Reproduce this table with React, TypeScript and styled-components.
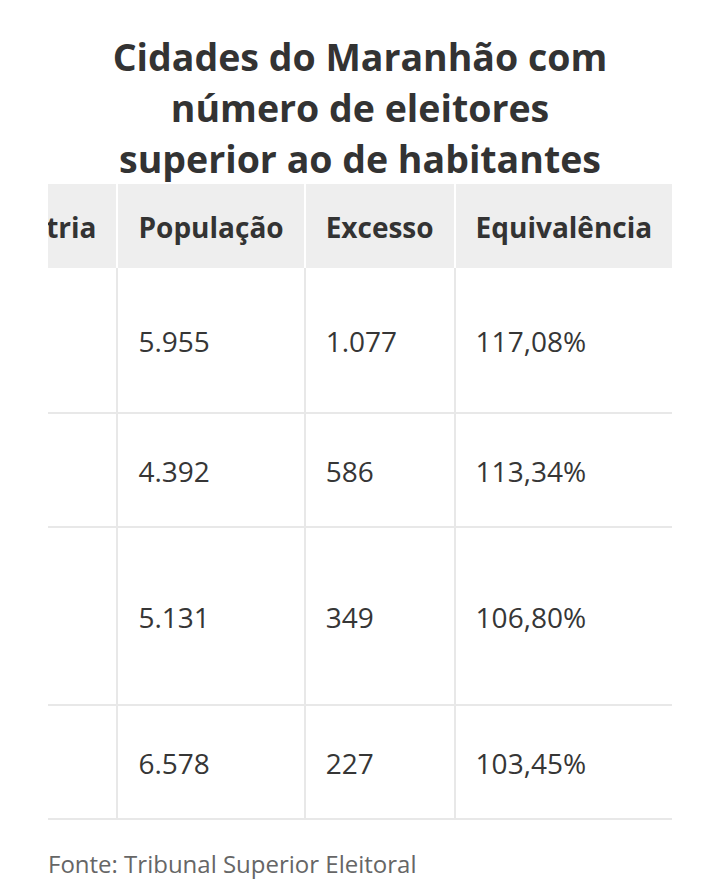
import React, { useLayoutEffect, useRef } from 'react';
import styled, { createGlobalStyle } from 'styled-components';

const GlobalStyle = createGlobalStyle`
  html, body {
    margin: 0;
    padding: 0;
    background: #ffffff;
  }
  body {
    font-family: 'Open Sans', 'Noto Sans', sans-serif;
    color: #333333;
  }
`;

type Row = {
  city: string[];
  voters: string;
  biometry: string;
  population: string;
  excess: string;
  ratio: string;
};

const rows: Row[] = [
  { city: ['Nova', 'Iorque'], voters: '7.032', biometry: 'Sim', population: '5.955', excess: '1.077', ratio: '117,08%' },
  { city: ['Bacurituba'], voters: '4.978', biometry: 'Sim', population: '4.392', excess: '586', ratio: '113,34%' },
  { city: ['São Pedro', 'dos', 'Crentes'], voters: '5.480', biometry: 'Sim', population: '5.131', excess: '349', ratio: '106,80%' },
  { city: ['Lagoa Grande'], voters: '6.805', biometry: 'Sim', population: '6.578', excess: '227', ratio: '103,45%' },
];

const headers = ['Município', 'Eleitores', 'Biometria', 'População', 'Excesso', 'Equivalência'];

const App = () => {
  const scrollRef = useRef<HTMLDivElement>(null);

  // a tabela fica rolada até o fim, como no print
  useLayoutEffect(() => {
    const toEnd = () => {
      const el = scrollRef.current;
      if (el) el.scrollLeft = el.scrollWidth;
    };
    toEnd();
    document.fonts?.ready.then(toEnd);
  }, []);

  return (
    <Page>
      <GlobalStyle />
      <Title>
        Cidades do Maranhão com
        <br />
        número de eleitores
        <br />
        superior ao de habitantes
      </Title>
      <TableScroll ref={scrollRef}>
        <Table>
          <thead>
            <tr>
              {headers.map((h) => (
                <HeadCell key={h}>{h}</HeadCell>
              ))}
            </tr>
          </thead>
          <tbody>
            {rows.map((r) => (
              <tr key={r.population}>
                <Cell>
                  {r.city.map((line, i) => (
                    <React.Fragment key={line}>
                      {i > 0 && <br />}
                      {line}
                    </React.Fragment>
                  ))}
                </Cell>
                <Cell>{r.voters}</Cell>
                <Cell>{r.biometry}</Cell>
                <Cell>{r.population}</Cell>
                <Cell>{r.excess}</Cell>
                <Cell>{r.ratio}</Cell>
              </tr>
            ))}
          </tbody>
        </Table>
      </TableScroll>
      <Source>Fonte: Tribunal Superior Eleitoral</Source>
    </Page>
  );
};

export default App;

const Page = styled.main`
  padding: 31px 48px 0;
  display: flex;
  flex-direction: column;
`;

const Title = styled.h1`
  margin: 0;
  text-align: center;
  font-size: 37.5px;
  line-height: 51px;
  font-weight: 700;
  color: #333333;
`;

const TableScroll = styled.div`
  overflow-x: auto;
  scrollbar-width: none;
  &::-webkit-scrollbar {
    display: none;
  }
`;

const Table = styled.table`
  border-collapse: separate;
  border-spacing: 0;
  white-space: nowrap;
  font-size: 28px;
  line-height: 32px;
`;

const HeadCell = styled.th`
  background: #eeeeee;
  padding: 27px 20px 25px;
  text-align: left;
  font-weight: 700;
  color: #333333;
  border-right: 2px solid #ffffff;
  &:last-child {
    border-right: none;
  }
`;

const Cell = styled.td`
  padding: 41px 20px 39px;
  font-weight: 400;
  color: #363636;
  vertical-align: middle;
  border-right: 2px solid #e8e8e8;
  border-bottom: 2px solid #e8e8e8;
  &:last-child {
    border-right: none;
  }
`;

const Source = styled.p`
  margin: 28px 0 0;
  font-size: 24px;
  line-height: 32px;
  color: #666666;
`;
